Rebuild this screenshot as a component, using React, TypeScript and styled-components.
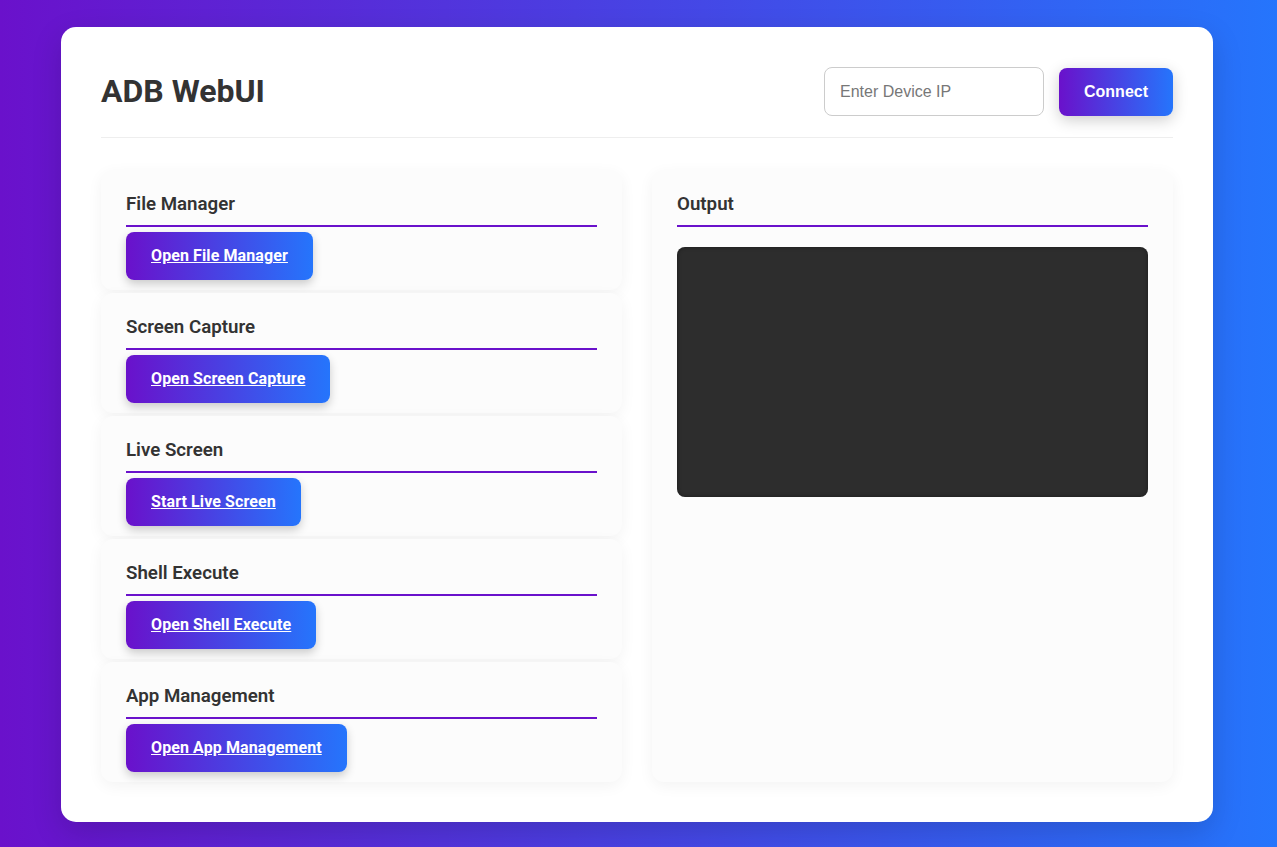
import styled, { createGlobalStyle } from "styled-components";

const GlobalStyle = createGlobalStyle`
  * {
    box-sizing: border-box;
  }
  html, body {
    margin: 0;
    padding: 0;
  }
  body {
    min-height: 100vh;
    padding: 27px 64px 24px 61px;
    font-family: Roboto, "Liberation Sans", Arial, sans-serif;
    background: linear-gradient(90deg, #6a11cb 0%, #2575fc 100%);
    color: #333;
  }
`;

const Container = styled.div`
  background: #ffffff;
  border-radius: 15px;
  padding: 40px;
  box-shadow: 0 10px 30px rgba(0, 0, 0, 0.15);
`;

const Header = styled.header`
  display: flex;
  justify-content: space-between;
  align-items: center;
  padding-bottom: 21px;
  border-bottom: 1px solid #eeeeee;
  margin-bottom: 32px;
`;

const Title = styled.h1`
  margin: 0;
  font-size: 32px;
  font-weight: 700;
  color: #333;
  line-height: 49px;
`;

const ConnectForm = styled.div`
  display: flex;
  align-items: center;
  gap: 15px;
`;

const IpInput = styled.input`
  width: 220px;
  height: 49px;
  padding: 0 15px;
  border: 1px solid #cccccc;
  border-radius: 8px;
  font-family: "Liberation Sans", Arial, sans-serif;
  font-size: 16px;
  color: #333;
  outline: none;
  &::placeholder {
    color: #777;
  }
`;

const GradientButton = styled.button`
  height: 48px;
  padding: 0 25px;
  border: 0;
  border-radius: 8px;
  background: linear-gradient(90deg, #6a11cb 0%, #2575fc 100%);
  color: white;
  font-family: "Liberation Sans", Arial, sans-serif;
  font-weight: 700;
  font-size: 16px;
  cursor: pointer;
  box-shadow: 0 4px 15px rgba(0, 0, 0, 0.2);
`;

const Grid = styled.div`
  display: grid;
  grid-template-columns: 1fr 1fr;
  gap: 30px;
`;

const Stack = styled.div`
  display: flex;
  flex-direction: column;
  gap: 3px;
`;

const Card = styled.section<{ $tall?: boolean }>`
  background: #fcfcfc;
  border-radius: 12px;
  padding: 23px 25px 10px;
  box-shadow: 0 4px 15px rgba(0, 0, 0, 0.05);
  height: ${(p) => (p.$tall ? "612px" : "120px")};
`;

const CardTitle = styled.h2`
  margin: 0;
  font-size: 18.72px;
  font-weight: 600;
  line-height: 22px;
  color: #333;
  padding-bottom: 10px;
  border-bottom: 2px solid #6a11cb;
`;

const ActionLink = styled.a`
  display: inline-block;
  margin-top: 5px;
  padding: 15px 25px;
  line-height: 18px;
  border-radius: 8px;
  background: linear-gradient(90deg, #6a11cb 0%, #2575fc 100%);
  color: white;
  font-weight: 700;
  font-size: 16px;
  letter-spacing: 0.1px;
  text-decoration: underline;
  box-shadow: 0 4px 10px rgba(0, 0, 0, 0.2);
  cursor: pointer;
`;

const OutputBox = styled.pre`
  margin: 20px 0 0;
  height: 250px;
  background: #2d2d2d;
  border-radius: 8px;
  color: #f0f0f0;
  padding: 15px;
  overflow: auto;
  box-shadow: inset 0 0 4px rgba(0, 0, 0, 0.4);
`;

const tools = [
  { title: "File Manager", action: "Open File Manager" },
  { title: "Screen Capture", action: "Open Screen Capture" },
  { title: "Live Screen", action: "Start Live Screen" },
  { title: "Shell Execute", action: "Open Shell Execute" },
  { title: "App Management", action: "Open App Management" },
];

export default function App() {
  return (
    <>
      <GlobalStyle />
      <Container>
        <Header>
          <Title>ADB WebUI</Title>
          <ConnectForm>
            <IpInput placeholder="Enter Device IP" />
            <GradientButton>Connect</GradientButton>
          </ConnectForm>
        </Header>
        <Grid>
          <Stack>
            {tools.map((t) => (
              <Card key={t.title}>
                <CardTitle>{t.title}</CardTitle>
                <ActionLink href="#">{t.action}</ActionLink>
              </Card>
            ))}
          </Stack>
          <Card $tall>
            <CardTitle>Output</CardTitle>
            <OutputBox></OutputBox>
          </Card>
        </Grid>
      </Container>
    </>
  );
}
